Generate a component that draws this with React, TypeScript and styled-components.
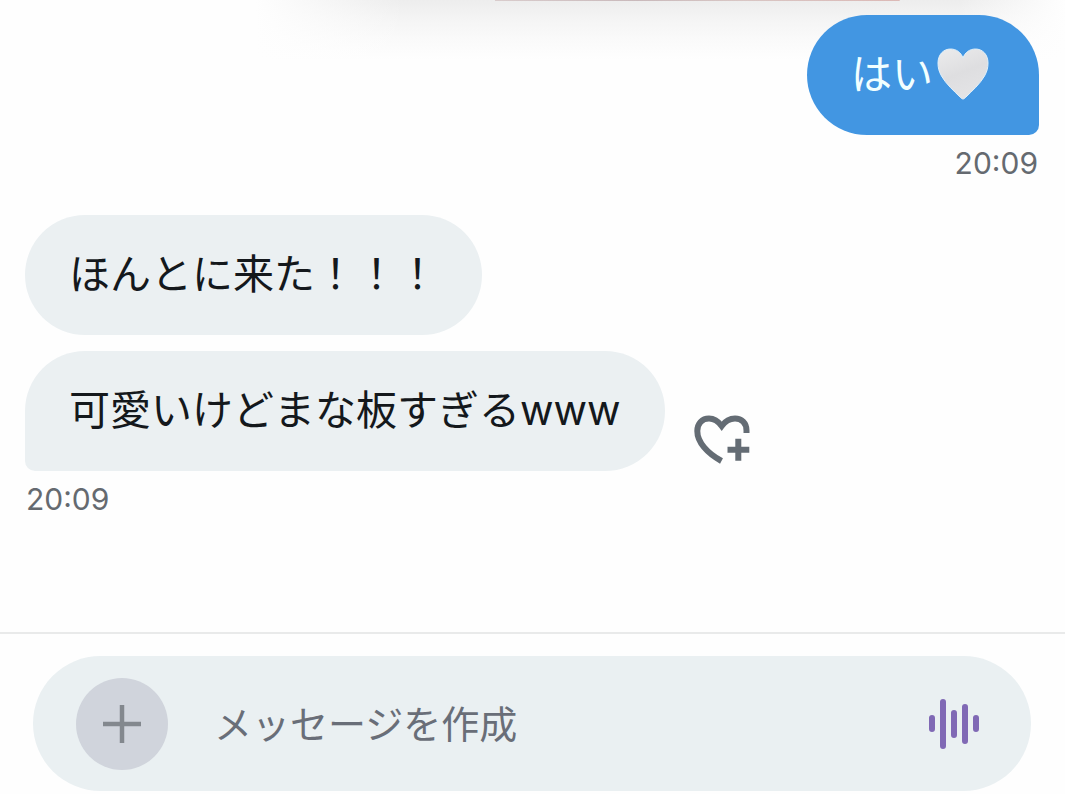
import React from "react";
import styled, { createGlobalStyle } from "styled-components";

const GlobalStyle = createGlobalStyle`
  * { box-sizing: border-box; }
  html, body, #root { height: 100%; }
  body {
    margin: 0;
    background: #fefefe;
    font-family: Inter, "Noto Sans CJK JP", sans-serif;
  }
`;

const Screen = styled.div`
  display: flex;
  flex-direction: column;
  min-height: 100%;
`;

const Thread = styled.main`
  flex: 1;
  display: flex;
  flex-direction: column;
  padding: 15px 26px 24px 25px;
  background:
    linear-gradient(90deg, #d9cccc, #c9b9bb 35%, #d8c6c4 60%, #dcb9b6) 495px 0 / 38% 1px no-repeat,
    linear-gradient(90deg, #fefefe 24%, #fefefe00 38%, #fefefe00 90%, #fefefe 100%) 0 0 / 100% 60px no-repeat,
    linear-gradient(180deg, #ededed, #f5f5f5 35%, #fafafa 65%, #fefefe) 0 0 / 100% 60px no-repeat;
`;

const Group = styled.section<{ $mine?: boolean }>`
  display: flex;
  flex-direction: column;
  align-items: ${(p) => (p.$mine ? "flex-end" : "flex-start")};
  gap: 16px;
  margin-bottom: ${(p) => (p.$mine ? "34px" : "0")};
`;

const Row = styled.div`
  display: flex;
  align-items: center;
  gap: 28px;
`;

const Bubble = styled.p<{ $mine?: boolean; $tail?: "left" | "right" }>`
  display: flex;
  align-items: center;
  min-height: 120px;
  margin: 0;
  padding: 0 44px 2px;
  border-radius: 60px;
  ${(p) => p.$tail === "left" && "border-bottom-left-radius: 10px;"}
  ${(p) => p.$tail === "right" && "border-bottom-right-radius: 10px;"}
  background: ${(p) => (p.$mine ? "#4296e2" : "#ebf0f2")};
  color: ${(p) => (p.$mine ? "#f2ffff" : "#14181c")};
  font-size: 41px;
  line-height: 60px;
`;

const Time = styled.time`
  margin-top: -6px;
  padding: 0 1px;
  color: #656a70;
  font-size: 30px;
  line-height: 36px;
`;

const HeartEmoji = styled.svg`
  flex: none;
  width: 52px;
  height: 52px;
  margin: 0 6px 0 4px;
`;

const ReactButton = styled.button`
  display: flex;
  margin-top: 58px;
  padding: 0;
  border: 0;
  background: none;
  color: #646c74;
`;

const Composer = styled.form`
  padding: 22px 34px 3px 33px;
  border-top: 2px solid #e9eaea;
`;

const Field = styled.div`
  display: flex;
  align-items: center;
  height: 135px;
  padding: 0 51px 0 43px;
  border-radius: 68px;
  background: #eaf0f2;
`;

const AddButton = styled.button`
  display: flex;
  align-items: center;
  justify-content: center;
  flex: none;
  width: 92px;
  height: 92px;
  padding: 0;
  border: 0;
  border-radius: 50%;
  background: #d0d4dc;
  color: #83888e;
`;

const MessageInput = styled.input`
  flex: 1;
  min-width: 0;
  height: 60px;
  margin: 0 24px 0 46px;
  padding: 0;
  border: 0;
  outline: 0;
  background: none;
  color: #14181c;
  font: inherit;
  font-size: 38px;
  &::placeholder { color: #696e78; opacity: 1; }
`;

const VoiceButton = styled.button`
  display: flex;
  flex: none;
  padding: 0;
  border: 0;
  background: none;
  color: #8069b5;
`;

const WhiteHeart = () => (
  <HeartEmoji viewBox="0 0 52 52" role="img" aria-label="白いハート">
    <defs>
      <linearGradient id="heartFill" x1="0.2" y1="0" x2="0.6" y2="1">
        <stop offset="0" stopColor="#eaeaeb" />
        <stop offset="0.5" stopColor="#dedee0" />
        <stop offset="1" stopColor="#e4e4e6" />
      </linearGradient>
    </defs>
    <path
      d="M26 51C25 51 24 50 23 49C17 43 9 36 4.500 28C2 23.500 1 20 1 15C1 6.500 6.500 1 13.500 1C19.500 1 24 4.500 26 10C28 4.500 32.500 1 38.500 1C45.500 1 51 6.500 51 15C51 20 50 23.500 47.500 28C43 36 35 43 29 49C28 50 27 51 26 51Z"
      fill="url(#heartFill)"
      stroke="#e2f1fa"
      strokeWidth="1"
    />
  </HeartEmoji>
);

const HeartPlus = () => (
  <svg width="60" height="54" viewBox="8 8 60 54" fill="none" stroke="currentColor" strokeWidth="6" aria-hidden="true">
    <path d="M61.500 28V25.500C61.500 18 56.500 13.500 50 13.500C44.500 13.500 40 16.500 36.700 21C33.400 16.500 29.500 13.500 24 13.500C17 13.500 12.300 18.500 12.300 26C12.300 37 22 48 36.500 56" />
    <path d="M53.300 33.800V55.800M42.500 44.700H64.300" />
  </svg>
);

const Plus = () => (
  <svg width="38" height="38" viewBox="0 0 38 38" stroke="currentColor" strokeWidth="4.500" aria-hidden="true">
    <path d="M19 0V38M0 19H38" />
  </svg>
);

const Wave = () => (
  <svg width="52" height="52" viewBox="0 0 52 52" stroke="currentColor" strokeWidth="6" strokeLinecap="round" aria-hidden="true">
    <path d="M4 20V31M15 4V48M26 15V37M37 9V43M48 20V31" />
  </svg>
);

export default function App() {
  return (
    <>
      <GlobalStyle />
      <Screen>
        <Thread>
          <Group $mine>
            <Bubble $mine $tail="right">
              はい
              <WhiteHeart />
            </Bubble>
            <Time dateTime="20:09">20:09</Time>
          </Group>
          <Group>
            <Bubble>ほんとに来た！！！</Bubble>
            <Row>
              <Bubble $tail="left">可愛いけどまな板すぎるwww</Bubble>
              <ReactButton type="button" aria-label="リアクションを追加">
                <HeartPlus />
              </ReactButton>
            </Row>
            <Time dateTime="20:09">20:09</Time>
          </Group>
        </Thread>
        <Composer onSubmit={(e) => e.preventDefault()}>
          <Field>
            <AddButton type="button" aria-label="追加">
              <Plus />
            </AddButton>
            <MessageInput type="text" aria-label="メッセージ" placeholder="メッセージを作成" />
            <VoiceButton type="button" aria-label="ボイスメッセージ">
              <Wave />
            </VoiceButton>
          </Field>
        </Composer>
      </Screen>
    </>
  );
}
